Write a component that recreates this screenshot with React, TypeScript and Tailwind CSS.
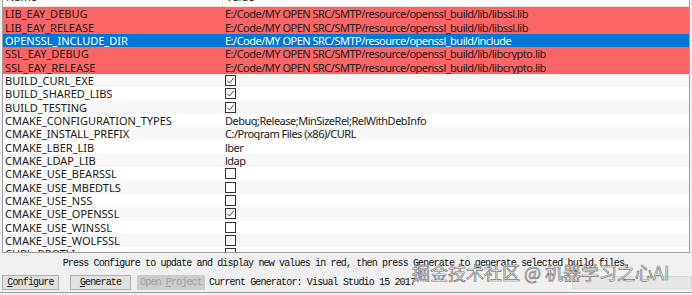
import React from "react";

type Row = { name: string; value?: string; check?: boolean; kind?: "red" | "sel" };

const rows: Row[] = [
  { name: "LIB_EAY_DEBUG", value: "E:/Code/MY OPEN SRC/SMTP/resource/openssl_build/lib/libssl.lib", kind: "red" },
  { name: "LIB_EAY_RELEASE", value: "E:/Code/MY OPEN SRC/SMTP/resource/openssl_build/lib/libssl.lib", kind: "red" },
  { name: "OPENSSL_INCLUDE_DIR", value: "E:/Code/MY OPEN SRC/SMTP/resource/openssl_build/include", kind: "sel" },
  { name: "SSL_EAY_DEBUG", value: "E:/Code/MY OPEN SRC/SMTP/resource/openssl_build/lib/libcrypto.lib", kind: "red" },
  { name: "SSL_EAY_RELEASE", value: "E:/Code/MY OPEN SRC/SMTP/resource/openssl_build/lib/libcrypto.lib", kind: "red" },
  { name: "BUILD_CURL_EXE", check: true },
  { name: "BUILD_SHARED_LIBS", check: true },
  { name: "BUILD_TESTING", check: true },
  { name: "CMAKE_CONFIGURATION_TYPES", value: "Debug;Release;MinSizeRel;RelWithDebInfo" },
  { name: "CMAKE_INSTALL_PREFIX", value: "C:/Program Files (x86)/CURL" },
  { name: "CMAKE_LBER_LIB", value: "lber" },
  { name: "CMAKE_LDAP_LIB", value: "ldap" },
  { name: "CMAKE_USE_BEARSSL", check: false },
  { name: "CMAKE_USE_MBEDTLS", check: false },
  { name: "CMAKE_USE_NSS", check: false },
  { name: "CMAKE_USE_OPENSSL", check: true },
  { name: "CMAKE_USE_WINSSL", check: false },
  { name: "CMAKE_USE_WOLFSSL", check: false },
  { name: "CURL_BROTLI", check: false },
];

function Box({ checked }: { checked: boolean }) {
  return (
    <div className="w-[11px] h-[11px] border border-[#333] bg-white flex items-center justify-center">
      {checked && (
        <svg width="9" height="9" viewBox="0 0 9 9">
          <path d="M1.2 4.6 L3.5 7 L7.8 1.8" fill="none" stroke="#333" strokeWidth="0.9" />
        </svg>
      )}
    </div>
  );
}

export default function App() {
  return (
    <div
      className="w-[692px] h-[295px] bg-[#f0f0f0] overflow-hidden relative flex flex-col"
      style={{ fontFamily: '"Noto Sans", sans-serif' }}
    >
      <div className="h-[253px] mx-[2px] border-x border-b border-[#a0a0a0] bg-white overflow-hidden flex flex-col shrink-0">
        <div className="h-[20px] mt-[-13px] shrink-0 flex border-b border-[#e5e5e5] text-[11px] text-[#222] leading-[20px]">
          <div className="w-[220px] pl-[3px] border-r border-[#e5e5e5]">Name</div>
          <div className="pl-[3px]">Value</div>
        </div>
        {rows.map((r, i) => {
          const bg =
            r.kind === "red"
              ? "bg-[#fc6565] text-[#1a1a1a]"
              : r.kind === "sel"
              ? "bg-[#0078d7] text-white"
              : i % 2 === 1
              ? "bg-[#f7f7f7] text-[#1a1a1a]"
              : "bg-white text-[#1a1a1a]";
          return (
            <div key={r.name} className={`h-[13.35px] shrink-0 flex items-center text-[11px] leading-none ${bg}`}>
              <div className="w-[220px] pl-[2px] whitespace-nowrap">{r.name}</div>
              <div className="pl-[2px] whitespace-nowrap flex items-center tracking-[-0.5px]">
                {r.check !== undefined ? <Box checked={r.check} /> : r.value}
              </div>
            </div>
          );
        })}
      </div>
      <div
        className="h-[20px] shrink-0 flex items-center justify-center text-[10px] text-[#111] tracking-[-0.85px]"
        style={{ fontFamily: '"Liberation Mono", monospace' }}
      >
        Press Configure to update and display new values in red, then press Generate to generate selected build files.
      </div>
      <div
        className="h-[17px] mt-[1px] shrink-0 flex items-center text-[10px] text-[#111] tracking-[-0.85px]"
        style={{ fontFamily: '"Liberation Mono", monospace' }}
      >
        <div className="ml-[2px] w-[57px] h-[15px] border border-[#adadad] bg-[#e1e1e1] flex items-center justify-center">
          <span><span className="underline">C</span>onfigure</span>
        </div>
        <div className="ml-[11px] w-[61px] h-[15px] border border-[#adadad] bg-[#e1e1e1] flex items-center justify-center">
          <span><span className="underline">G</span>enerate</span>
        </div>
        <div className="ml-[6px] w-[68px] h-[15px] bg-[#cccccc] text-[#a0a0a0] flex items-center justify-center">
          <span>Open <span className="underline">P</span>roject</span>
        </div>
        <div className="ml-[4px] whitespace-nowrap">Current Generator: Visual Studio 15 2017</div>
        <div className="ml-auto mr-0 w-[120px] h-[13px] bg-[#e6e6e6] border border-[#d6d6d6]" />
      </div>
      <div className="mt-[1px] h-[1px] bg-[#a0a0a0] shrink-0" />
      <div
        className="absolute left-[412px] top-[260px] text-[18px] leading-[24px] text-white/80 whitespace-nowrap [-webkit-text-stroke:0.7px_#777]"
        style={{ fontFamily: '"Noto Sans CJK SC", "Noto Sans", sans-serif' }}
      >
        掘金技术社区 @ 机器学习之心AI
      </div>
    </div>
  );
}
